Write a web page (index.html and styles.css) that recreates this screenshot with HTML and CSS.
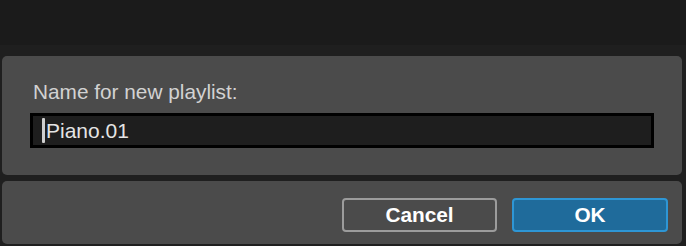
FILE: index.html
```html
<!DOCTYPE html>
<html>
<head>
<meta charset="utf-8">
<link rel="stylesheet" href="styles.css">
</head>
<body>
<div class="topbar"></div>
<div class="dialog">
  <div class="panel panel-main">
    <div class="label">Name for new playlist:</div>
    <div class="field"><span class="caret"></span><span class="value">Piano.01</span></div>
  </div>
  <div class="panel panel-buttons">
    <button class="btn btn-cancel">Cancel</button>
    <button class="btn btn-ok">OK</button>
  </div>
</div>
</body>
</html>
```
FILE: styles.css
```css
html, body {
  margin: 0;
  padding: 0;
  background: #1b1b1b;
  width: 686px;
  height: 246px;
  overflow: hidden;
  font-family: "Liberation Sans", Arial, sans-serif;
}
.topbar {
  height: 45px;
  background: #1b1b1b;
}
.dialog {
  background: #1f1f1f;
  padding: 11px 4px 0 2px;
  display: flex;
  flex-direction: column;
  gap: 6px;
  height: 201px;
  box-sizing: border-box;
}
.panel {
  background: #4b4b4b;
  border-radius: 5px;
}
.panel-main {
  height: 119px;
  box-sizing: border-box;
  padding: 24px 0 0 28px;
}
.label {
  color: #d2d2d2;
  font-size: 20.8px;
  line-height: 24px;
  padding-left: 3px;
}
.field {
  margin-top: 9px;
  width: 624px;
  height: 35px;
  box-sizing: border-box;
  border: 3px solid #000;
  background: #1e1e1e;
  display: flex;
  align-items: center;
  padding-left: 9px;
}
.caret {
  display: inline-block;
  width: 3px;
  height: 25px;
  background: #cfcfcf;
  border-radius: 1px;
  margin-right: 1px;
}
.value {
  color: #e4e4e4;
  font-size: 21px;
  line-height: 24px;
}
.panel-buttons {
  height: 63px;
  box-sizing: border-box;
  display: flex;
  justify-content: flex-end;
  align-items: flex-start;
  gap: 15px;
  padding: 17px 14px 0 0;
}
.btn {
  height: 34px;
  box-sizing: border-box;
  border-radius: 4px;
  font-family: "Liberation Sans", Arial, sans-serif;
  font-weight: bold;
  font-size: 20.8px;
  color: #ffffff;
  padding: 0;
  margin: 0;
}
.btn-cancel {
  width: 155px;
  background: #4b4b4b;
  border: 2px solid #9c9c9c;
}
.btn-ok {
  width: 156px;
  background: #1f6b9b;
  border: 2px solid #2e96d5;
}
```
